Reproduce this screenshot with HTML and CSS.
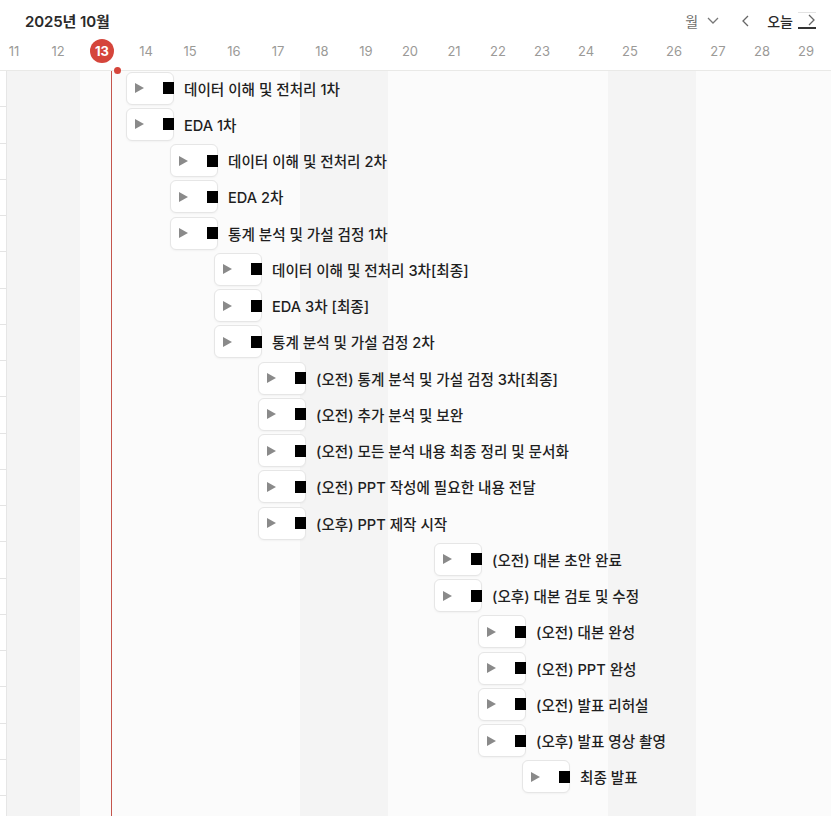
FILE: index.html
```html
<!DOCTYPE html>
<html lang="ko">
<head>
<meta charset="utf-8">
<title>Timeline</title>
<link rel="stylesheet" href="styles.css">
</head>
<body>
<div class="page">
  <header class="top">
    <div class="title-row">
      <div class="title">2025년 10월</div>
      <div class="controls">
        <span class="mode">월</span>
        <svg class="chev-down" width="12" height="7" viewBox="0 0 12 7"><path d="M1 1 L6 6 L11 1" fill="none" stroke="#777" stroke-width="1.3"/></svg>
        <svg class="chev-left" width="7" height="12" viewBox="0 0 7 12"><path d="M6 1 L1 6 L6 11" fill="none" stroke="#666" stroke-width="1.3"/></svg>
        <span class="today-btn">오늘</span>
        <span class="next-btn"><svg width="7" height="12" viewBox="0 0 7 12"><path d="M1 1 L6 6 L1 11" fill="none" stroke="#666" stroke-width="1.3"/></svg></span>
      </div>
    </div>
    <div class="days">
      <span class="day">11</span><span class="day">12</span><span class="day"><span class="today">13</span></span><span class="day">14</span><span class="day">15</span><span class="day">16</span><span class="day">17</span><span class="day">18</span><span class="day">19</span><span class="day">20</span><span class="day">21</span><span class="day">22</span><span class="day">23</span><span class="day">24</span><span class="day">25</span><span class="day">26</span><span class="day">27</span><span class="day">28</span><span class="day">29</span>
    </div>
  </header>
  <main class="chart">
    <div class="gutter">
      <div class="tick"></div><div class="tick"></div><div class="tick"></div><div class="tick"></div><div class="tick"></div><div class="tick"></div><div class="tick"></div><div class="tick"></div><div class="tick"></div><div class="tick"></div><div class="tick"></div><div class="tick"></div><div class="tick"></div><div class="tick"></div><div class="tick"></div><div class="tick"></div><div class="tick"></div><div class="tick"></div><div class="tick"></div><div class="tick"></div>
    </div>
    <div class="canvas">
      <div class="now-line"><span class="now-dot"></span></div>
      <div class="rows">
      <div class="row l0"><div class="card"><svg class="tri" width="9" height="10" viewBox="0 0 9 10"><path d="M0 0 L9 5 L0 10 Z" fill="#8a8a8a"/></svg></div><span class="sq"></span><span class="label">데이터 이해 및 전처리 1차</span></div>
      <div class="row l0"><div class="card"><svg class="tri" width="9" height="10" viewBox="0 0 9 10"><path d="M0 0 L9 5 L0 10 Z" fill="#8a8a8a"/></svg></div><span class="sq"></span><span class="label">EDA 1차</span></div>
      <div class="row l1"><div class="card"><svg class="tri" width="9" height="10" viewBox="0 0 9 10"><path d="M0 0 L9 5 L0 10 Z" fill="#8a8a8a"/></svg></div><span class="sq"></span><span class="label">데이터 이해 및 전처리 2차</span></div>
      <div class="row l1"><div class="card"><svg class="tri" width="9" height="10" viewBox="0 0 9 10"><path d="M0 0 L9 5 L0 10 Z" fill="#8a8a8a"/></svg></div><span class="sq"></span><span class="label">EDA 2차</span></div>
      <div class="row l1"><div class="card"><svg class="tri" width="9" height="10" viewBox="0 0 9 10"><path d="M0 0 L9 5 L0 10 Z" fill="#8a8a8a"/></svg></div><span class="sq"></span><span class="label">통계 분석 및 가설 검정 1차</span></div>
      <div class="row l2"><div class="card"><svg class="tri" width="9" height="10" viewBox="0 0 9 10"><path d="M0 0 L9 5 L0 10 Z" fill="#8a8a8a"/></svg></div><span class="sq"></span><span class="label">데이터 이해 및 전처리 3차[최종]</span></div>
      <div class="row l2"><div class="card"><svg class="tri" width="9" height="10" viewBox="0 0 9 10"><path d="M0 0 L9 5 L0 10 Z" fill="#8a8a8a"/></svg></div><span class="sq"></span><span class="label">EDA 3차 [최종]</span></div>
      <div class="row l2"><div class="card"><svg class="tri" width="9" height="10" viewBox="0 0 9 10"><path d="M0 0 L9 5 L0 10 Z" fill="#8a8a8a"/></svg></div><span class="sq"></span><span class="label">통계 분석 및 가설 검정 2차</span></div>
      <div class="row l3"><div class="card"><svg class="tri" width="9" height="10" viewBox="0 0 9 10"><path d="M0 0 L9 5 L0 10 Z" fill="#8a8a8a"/></svg></div><span class="sq"></span><span class="label">(오전) 통계 분석 및 가설 검정 3차[최종]</span></div>
      <div class="row l3"><div class="card"><svg class="tri" width="9" height="10" viewBox="0 0 9 10"><path d="M0 0 L9 5 L0 10 Z" fill="#8a8a8a"/></svg></div><span class="sq"></span><span class="label">(오전) 추가 분석 및 보완</span></div>
      <div class="row l3"><div class="card"><svg class="tri" width="9" height="10" viewBox="0 0 9 10"><path d="M0 0 L9 5 L0 10 Z" fill="#8a8a8a"/></svg></div><span class="sq"></span><span class="label">(오전) 모든 분석 내용 최종 정리 및 문서화</span></div>
      <div class="row l3"><div class="card"><svg class="tri" width="9" height="10" viewBox="0 0 9 10"><path d="M0 0 L9 5 L0 10 Z" fill="#8a8a8a"/></svg></div><span class="sq"></span><span class="label">(오전) PPT 작성에 필요한 내용 전달</span></div>
      <div class="row l3"><div class="card"><svg class="tri" width="9" height="10" viewBox="0 0 9 10"><path d="M0 0 L9 5 L0 10 Z" fill="#8a8a8a"/></svg></div><span class="sq"></span><span class="label">(오후) PPT 제작 시작</span></div>
      <div class="row l7"><div class="card"><svg class="tri" width="9" height="10" viewBox="0 0 9 10"><path d="M0 0 L9 5 L0 10 Z" fill="#8a8a8a"/></svg></div><span class="sq"></span><span class="label">(오전) 대본 초안 완료</span></div>
      <div class="row l7"><div class="card"><svg class="tri" width="9" height="10" viewBox="0 0 9 10"><path d="M0 0 L9 5 L0 10 Z" fill="#8a8a8a"/></svg></div><span class="sq"></span><span class="label">(오후) 대본 검토 및 수정</span></div>
      <div class="row l8"><div class="card"><svg class="tri" width="9" height="10" viewBox="0 0 9 10"><path d="M0 0 L9 5 L0 10 Z" fill="#8a8a8a"/></svg></div><span class="sq"></span><span class="label">(오전) 대본 완성</span></div>
      <div class="row l8"><div class="card"><svg class="tri" width="9" height="10" viewBox="0 0 9 10"><path d="M0 0 L9 5 L0 10 Z" fill="#8a8a8a"/></svg></div><span class="sq"></span><span class="label">(오전) PPT 완성</span></div>
      <div class="row l8"><div class="card"><svg class="tri" width="9" height="10" viewBox="0 0 9 10"><path d="M0 0 L9 5 L0 10 Z" fill="#8a8a8a"/></svg></div><span class="sq"></span><span class="label">(오전) 발표 리허설</span></div>
      <div class="row l8"><div class="card"><svg class="tri" width="9" height="10" viewBox="0 0 9 10"><path d="M0 0 L9 5 L0 10 Z" fill="#8a8a8a"/></svg></div><span class="sq"></span><span class="label">(오후) 발표 영상 촬영</span></div>
      <div class="row l9"><div class="card"><svg class="tri" width="9" height="10" viewBox="0 0 9 10"><path d="M0 0 L9 5 L0 10 Z" fill="#8a8a8a"/></svg></div><span class="sq"></span><span class="label">최종 발표</span></div>
      </div>
    </div>
  </main>
</div>
</body>
</html>
```
FILE: styles.css
```css
* { box-sizing: border-box; }
html, body { margin: 0; padding: 0; background: #fff; }
body {
  width: 831px;
  height: 816px;
  overflow: hidden;
  font-family: Inter, "Noto Sans CJK KR", sans-serif;
  color: #222;
}
.page { display: flex; flex-direction: column; height: 816px; }

.top {
  height: 71px;
  border-bottom: 1px solid #e9e9e7;
  overflow: hidden;
  flex: none;
}
.title-row {
  height: 39px;
  display: flex;
  align-items: center;
  justify-content: space-between;
  padding: 2px 0 0 25px;
}
.title {
  font-size: 15px;
  font-weight: 600;
  color: #2a2a2a;
  letter-spacing: -0.1px;
}
.controls {
  display: flex;
  align-items: center;
  height: 20px;
}
.mode { font-size: 14px; color: #6f6e6b; margin-right: 9px; margin-left: 2px; }
.chev-down { margin-right: 23px; }
.chev-left { margin-right: 18px; }
.today-btn { font-size: 14px; color: #2a2a2a; font-weight: 500; margin-right: 5px; }
.next-btn {
  width: 18px;
  height: 17px;
  display: flex;
  align-items: center;
  justify-content: flex-end;
  border-top: 1px solid #e3e3e3;
  border-bottom: 2px solid #333;
  margin-right: 15px;
  padding-right: 1px;
}

.days {
  display: flex;
  margin-left: -8px;
  height: 24px;
}
.day {
  flex: none;
  width: 44px;
  display: flex;
  align-items: center;
  justify-content: center;
  font-size: 13px;
  color: #9b9a97;
}
.today {
  width: 24px;
  height: 24px;
  border-radius: 50%;
  background: #d5453b;
  color: #fff;
  font-weight: 700;
  display: flex;
  align-items: center;
  justify-content: center;
  font-size: 13px;
}

.chart {
  flex: 1;
  display: flex;
}
.gutter { width: 6px; flex: none; }
.tick { height: 36.25px; border-bottom: 1px solid #e4e4e4; }
.canvas {
  flex: 1;
  position: relative;
  border-left: 1px solid #e6e6e6;
  background: repeating-linear-gradient(to right,
    #f4f4f4 0 73px,
    #fbfbfb 73px 293px,
    #f4f4f4 293px 308px);
}
.now-line {
  position: absolute;
  left: 104px;
  top: 0;
  bottom: 0;
  width: 1px;
  background: #c4554d;
  z-index: 2;
}
.now-dot {
  position: absolute;
  left: 3px;
  top: -4px;
  width: 7px;
  height: 7px;
  border-radius: 50%;
  background: #d5453b;
}

.rows { margin-top: -1px; }
.row {
  height: 36.26px;
  display: flex;
  align-items: center;
  position: relative;
}
.l0 { padding-left: 119px; }
.l1 { padding-left: 163px; }
.l2 { padding-left: 207px; }
.l3 { padding-left: 251px; }
.l7 { padding-left: 427px; }
.l8 { padding-left: 471px; }
.l9 { padding-left: 515px; }

.card {
  width: 48px;
  height: 33px;
  flex: none;
  background: #fff;
  border: 1px solid #e6e6e6;
  border-radius: 6px;
  box-shadow: 0 1px 2px rgba(0,0,0,0.04);
  display: flex;
  align-items: center;
  padding-left: 8px;
}
.tri { display: block; }
.sq {
  width: 11px;
  height: 12px;
  background: #000;
  margin-left: -11px;
  flex: none;
  position: relative;
}
.label {
  margin-left: 10px;
  font-size: 14.6px;
  font-weight: 500;
  color: #1f1f1f;
  white-space: nowrap;
}
```
